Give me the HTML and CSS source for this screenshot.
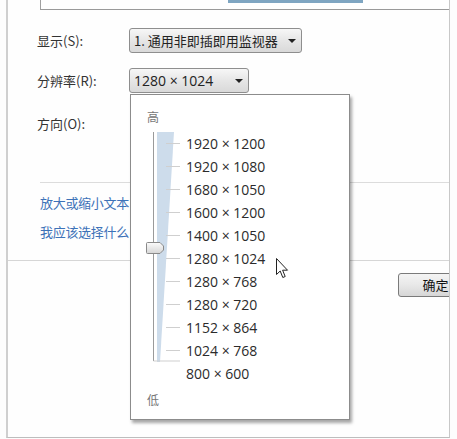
FILE: index.html
```html
<!DOCTYPE html>
<html lang="zh-CN">
<head>
<meta charset="utf-8">
<title>屏幕分辨率</title>
<link rel="stylesheet" href="styles.css">
</head>
<body>
<div class="frame">
  <div class="window">
    <div class="topbox"><div class="topbar"></div></div>
    <div class="form">
      <div class="label">显示(S):</div>
      <div class="select select-display"><span>1. 通用非即插即用监视器</span><i class="arrow"></i></div>
      <div class="label">分辨率(R):</div>
      <div class="select select-res"><span>1280 × 1024</span><i class="arrow"></i></div>
      <div class="label label-last">方向(O):</div>
      <div></div>
    </div>
    <div class="sep"></div>
    <div class="links">
      <a class="link">放大或缩小文本</a>
      <a class="link">我应该选择什么</a>
    </div>
    <div class="sep-full"></div>
    <div class="btn">确定</div>
  </div>

  <div class="popup">
    <div class="hilo">高</div>
    <div class="popup-body">
      <svg class="slider" width="56" height="253" viewBox="0 0 56 253">
        <polygon points="27,0 44,0 30,230 27,230" fill="#cddceb"/>
        <line x1="23.5" y1="0" x2="23.5" y2="229" stroke="#9a9a9a" stroke-width="1"/>
        <line x1="23.5" y1="229" x2="50" y2="229" stroke="#cfcfcf" stroke-width="1"/>
        <g stroke="#cfcfcf" stroke-width="1">
          <line x1="36" y1="11.5" x2="50" y2="11.5"/>
          <line x1="36" y1="34.5" x2="50" y2="34.5"/>
          <line x1="36" y1="57.5" x2="50" y2="57.5"/>
          <line x1="36" y1="80.5" x2="50" y2="80.5"/>
          <line x1="36" y1="103.5" x2="50" y2="103.5"/>
          <line x1="36" y1="126.5" x2="50" y2="126.5"/>
          <line x1="36" y1="149.5" x2="50" y2="149.5"/>
          <line x1="36" y1="172.5" x2="50" y2="172.5"/>
          <line x1="36" y1="195.5" x2="50" y2="195.5"/>
          <line x1="36" y1="218.5" x2="50" y2="218.5"/>
        </g>
        <defs>
          <linearGradient id="th" x1="0" y1="0" x2="0" y2="1">
            <stop offset="0" stop-color="#fbfbfb"/>
            <stop offset="1" stop-color="#d6d6d6"/>
          </linearGradient>
        </defs>
        <path d="M17.5,110.5 H30 L33.5,114 V118 L30,121.5 H17.5 Q16.5,121.5 16.5,120.5 V111.5 Q16.5,110.5 17.5,110.5 Z" fill="url(#th)" stroke="#8a8a8a" stroke-width="1"/>
      </svg>
      <ul class="items">
        <li>1920 × 1200</li>
        <li>1920 × 1080</li>
        <li>1680 × 1050</li>
        <li>1600 × 1200</li>
        <li>1400 × 1050</li>
        <li>1280 × 1024</li>
        <li>1280 × 768</li>
        <li>1280 × 720</li>
        <li>1152 × 864</li>
        <li>1024 × 768</li>
        <li>800 × 600</li>
      </ul>
    </div>
    <div class="hilo">低</div>
  </div>

  <svg class="cursor" width="13" height="21" viewBox="0 0 13 21">
    <path d="M0.5,0.5 V16.5 L4.2,13 L6.8,19.5 L9.2,18.5 L6.6,12.2 H11.5 Z" fill="#fff" stroke="#222" stroke-width="1" stroke-linejoin="round"/>
  </svg>
</div>
</body>
</html>
```

FILE: styles.css
```css
* { box-sizing: border-box; }
html, body { margin: 0; padding: 0; }
body {
  font-family: "Noto Sans CJK SC", "Open Sans", sans-serif;
  font-size: 13px;
  color: #333;
  background: #fff;
}
.frame {
  position: relative;
  width: 457px;
  height: 439px;
  overflow: hidden;
  background: #fdfdfd;
}
.window {
  margin-left: 6px;
  width: 444px;
  height: 438px;
  border-left: 2px solid #cfcfcf;
  border-right: 1px solid #c8c8c8;
  border-bottom: 1px solid #bdbdbd;
  overflow: hidden;
  background: #fefefe;
}
.topbox {
  margin-left: 32px;
  height: 10px;
  border-left: 1px solid #a0a0a0;
  border-bottom: 1px solid #9a9a9a;
  background: #fff;
}
.topbar {
  margin-left: 187px;
  width: 135px;
  height: 3px;
  background: #7fa6c2;
}
.form {
  margin-top: 18px;
  padding-left: 29px;
  display: grid;
  grid-template-columns: 92px auto;
  grid-template-rows: 25px 25px 28px;
  row-gap: 15px;
  align-items: center;
}
.label {
  line-height: 18px;
  color: #333;
}
.label-last { padding-top: 3px; }
.select {
  height: 25px;
  display: flex;
  align-items: center;
  justify-content: space-between;
  padding: 0 5px 0 4px;
  border: 1px solid #8e8e8e;
  border-radius: 3px;
  background: linear-gradient(#f7f7f7, #e6e6e6 50%, #d9d9d9);
  font-family: "Noto Sans CJK SC", "Open Sans", sans-serif;
  color: #222;
  line-height: 18px;
}
.select-display { width: 173px; }
.select-res {
  width: 120px;
  font-family: "Open Sans", "Noto Sans CJK SC", sans-serif;
  font-size: 14px;
}
.arrow {
  display: block;
  width: 0;
  height: 0;
  border-left: 4px solid transparent;
  border-right: 4px solid transparent;
  border-top: 4px solid #222;
  margin-top: 1px;
}
.sep {
  margin-top: 46px;
  margin-left: 32px;
  height: 1px;
  background: #dcdcdc;
}
.links {
  margin-top: 10px;
  margin-left: 32px;
  display: flex;
  flex-direction: column;
  align-items: flex-start;
  gap: 9px;
}
.link {
  display: block;
  line-height: 20px;
  color: #3d72b8;
  white-space: nowrap;
  letter-spacing: -0.3px;
}
.sep-full {
  margin-top: 18px;
  height: 1px;
  background: #d6d6d6;
}
.btn {
  margin-top: 12px;
  margin-left: 390px;
  width: 75px;
  height: 24px;
  border: 1px solid #7a7a7a;
  border-radius: 3px;
  background: linear-gradient(#f4f4f4, #e8e8e8 50%, #d6d6d6);
  display: flex;
  align-items: center;
  justify-content: center;
  color: #111;
  line-height: 18px;
}
.popup {
  position: absolute;
  left: 130px;
  top: 94px;
  width: 220px;
  height: 326px;
  background: #fff;
  border: 1px solid #8c8c8c;
  box-shadow: 2px 3px 3px rgba(0,0,0,0.35);
  padding: 13px 0 0 16px;
}
.hilo {
  line-height: 18px;
  font-size: 12px;
  color: #777;
}
.popup-body {
  display: flex;
  margin-top: 6px;
  margin-left: -17px;
}
.slider { display: block; flex: none; }
.items {
  list-style: none;
  margin: 0;
  padding: 0;
  font-family: "Open Sans", sans-serif;
  font-size: 14px;
  color: #2b2b2b;
}
.items li {
  height: 23px;
  line-height: 23px;
  white-space: nowrap;
}
.popup-body + .hilo { margin-top: 6px; }
.cursor {
  position: absolute;
  left: 276px;
  top: 258px;
}
```
